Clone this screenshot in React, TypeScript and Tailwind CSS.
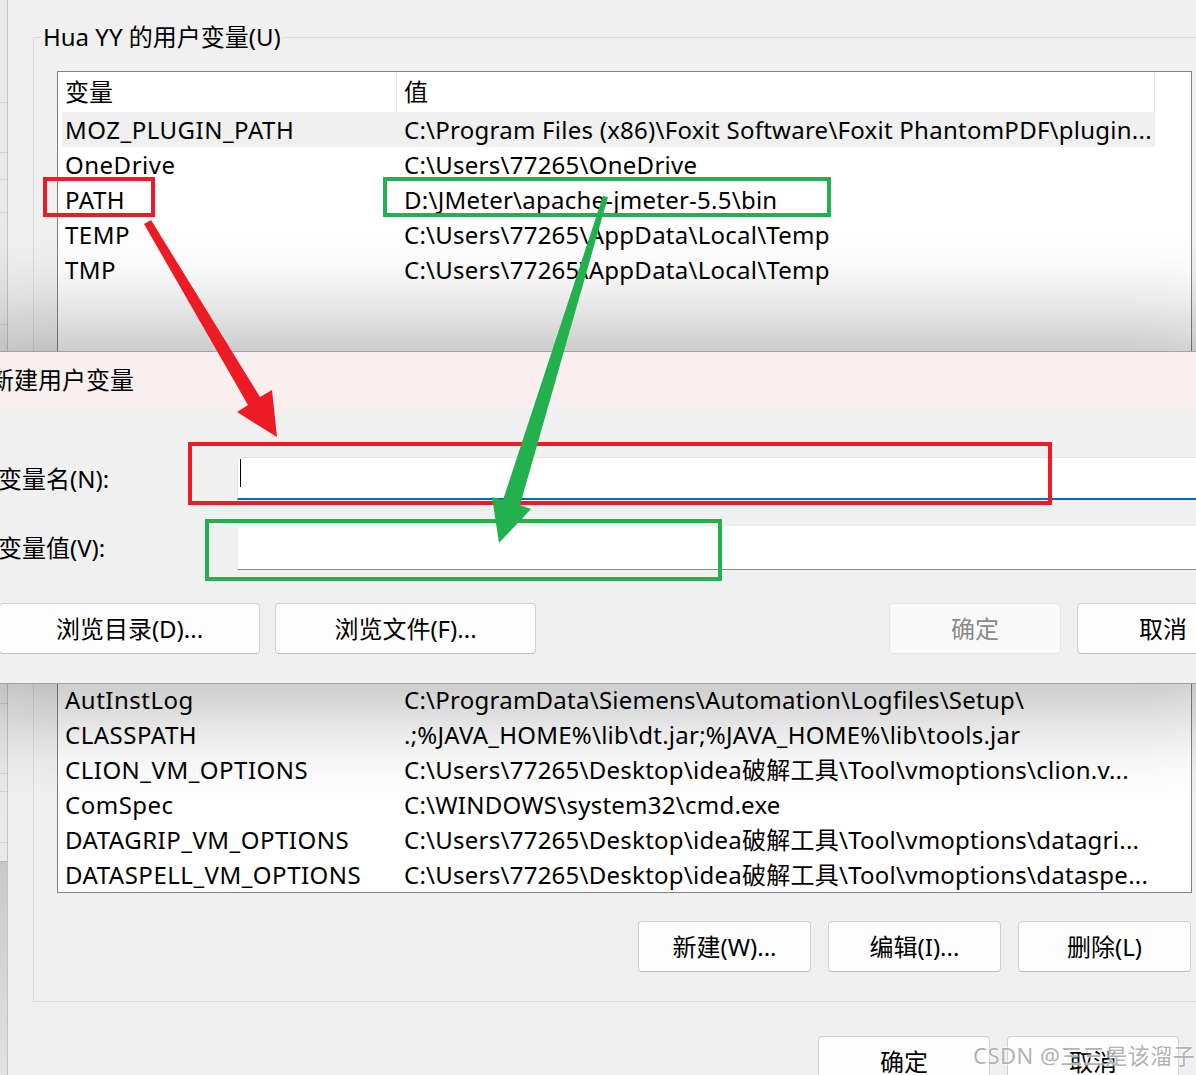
import React from 'react'

// rows of the user-variable list (top part visible above the dialog, bottom part below it)
const topRows = [
  ['MOZ_PLUGIN_PATH', 'C:\\Program Files (x86)\\Foxit Software\\Foxit PhantomPDF\\plugin...'],
  ['OneDrive', 'C:\\Users\\77265\\OneDrive'],
  ['PATH', 'D:\\JMeter\\apache-jmeter-5.5\\bin'],
  ['TEMP', 'C:\\Users\\77265\\AppData\\Local\\Temp'],
  ['TMP', 'C:\\Users\\77265\\AppData\\Local\\Temp'],
]

const bottomRows = [
  ['AutInstLog', 'C:\\ProgramData\\Siemens\\Automation\\Logfiles\\Setup\\'],
  ['CLASSPATH', '.;%JAVA_HOME%\\lib\\dt.jar;%JAVA_HOME%\\lib\\tools.jar'],
  ['CLION_VM_OPTIONS', 'C:\\Users\\77265\\Desktop\\idea破解工具\\Tool\\vmoptions\\clion.v...'],
  ['ComSpec', 'C:\\WINDOWS\\system32\\cmd.exe'],
  ['DATAGRIP_VM_OPTIONS', 'C:\\Users\\77265\\Desktop\\idea破解工具\\Tool\\vmoptions\\datagri...'],
  ['DATASPELL_VM_OPTIONS', 'C:\\Users\\77265\\Desktop\\idea破解工具\\Tool\\vmoptions\\dataspe...'],
]

function Row({ name, value, selected }: { name: string; value: string; selected?: boolean }) {
  return (
    <div className={`flex h-[35px] leading-[35px] w-[1093px] ${selected ? 'bg-[#f0f0f0]' : ''}`}>
      <div className="w-[335px] pl-[3px] whitespace-nowrap tracking-[0.5px]">{name}</div>
      <div className="w-[758px] pl-[7px] whitespace-nowrap overflow-hidden tracking-[0.25px]">{value}</div>
    </div>
  )
}

function WinButton({ children, className = '', disabled }: { children: React.ReactNode; className?: string; disabled?: boolean }) {
  return (
    <div
      className={`h-[51px] shrink-0 flex items-center justify-center rounded-[4px] border ${
        disabled
          ? 'bg-[#f9f9f9] border-[#e6e6e6] text-[#8a8a8a]'
          : 'bg-[#fdfdfd] border-[#d0d0d0] border-b-[#bdbdbd] text-black'
      } ${className}`}
    >
      {children}
    </div>
  )
}

export default function App() {
  return (
    <div className="relative w-[1196px] h-[1075px] overflow-hidden bg-[#f0f0f0] text-[24px] text-black [font-family:'Noto_Sans','Noto_Sans_CJK_SC',sans-serif]">
      <div className="flex h-full">
        {/* edge of another window behind */}
        <div className="w-[8px] shrink-0 flex flex-col bg-[#e9e9e9] border-r border-[#c4c4c4]">
          <div className="h-[103px] shrink-0 border-b border-[#d4d4d4]" />
          <div className="h-[50px] shrink-0 border-b border-[#d4d4d4]" />
          <div className="h-[27px] shrink-0 border-b border-[#d4d4d4]" />
          <div className="h-[33px] shrink-0 border-b border-[#d4d4d4]" />
          <div className="h-[112px] shrink-0 border-b border-[#d4d4d4]" />
          <div className="h-[379px] shrink-0 border-b border-[#d4d4d4]" />
          <div className="h-[70px] shrink-0 border-b border-[#d4d4d4]" />
          <div className="h-[18px] shrink-0 border-b border-[#d4d4d4]" />
          <div className="h-[51px] shrink-0 border-b border-[#d4d4d4]" />
          <div className="h-[19px] shrink-0 border-b border-[#b8b8b8]" />
          <div className="flex-1 bg-gradient-to-b from-[#c8c8c8] to-[#e2e2e2]" />
        </div>

        {/* environment variables window */}
        <div className="flex-1 flex flex-col">
          <div className="ml-[25px] mt-[37px] w-[1200px] shrink-0 border border-[#dcdcdc] pl-[23px] pb-[29px]">
            <div className="-mt-[17px] -ml-[16px] w-fit bg-[#f0f0f0] px-[2px] leading-[32px]">Hua YY 的用户变量(U)</div>

            <div className="mt-[18px] w-[1135px] border border-[#838383] bg-white pl-[4px] flex flex-col overflow-hidden">
              <div className="flex h-[40px] items-center w-[1093px]">
                <div className="w-[335px] pl-[3px] h-full flex items-center border-r border-[#e5e5e5]">变量</div>
                <div className="w-[758px] pl-[7px] h-full flex items-center border-r border-[#e5e5e5]">值</div>
              </div>
              {topRows.map(([n, v], i) => (
                <Row key={n} name={n} value={v} selected={i === 0} />
              ))}
              <div className="h-[395px] shrink-0" />
              {bottomRows.map(([n, v]) => (
                <Row key={n} name={n} value={v} />
              ))}
            </div>

            <div className="mt-[28px] w-[1135px] flex justify-end gap-[17px] pr-[1px]">
              <WinButton className="w-[173px]">新建(W)...</WinButton>
              <WinButton className="w-[173px]">编辑(I)...</WinButton>
              <WinButton className="w-[173px]">删除(L)</WinButton>
            </div>
          </div>

          <div className="mt-[34px] flex pl-[810px] gap-[17px]">
            <WinButton className="w-[172px]">确定</WinButton>
            <WinButton className="w-[172px]">取消</WinButton>
          </div>
        </div>
      </div>

      {/* 新建用户变量 dialog */}
      <div className="absolute left-[-20px] top-[351px] w-[1240px] h-[333px] border border-[#a3a3a3] bg-[#f0f0f0] shadow-[0_0_90px_25px_rgba(0,0,0,0.28)] flex flex-col">
        <div className="h-[56px] shrink-0 bg-[#f9efef] flex items-center pl-[9px]">新建用户变量</div>

        <div className="mt-[49px] flex items-center">
          <div className="w-[256px] shrink-0 pl-[17px]">变量名(N):</div>
          <div className="flex-1 h-[43px] bg-white border border-[#e6e6e6] border-b-2 border-b-[#0067c0] rounded-t-[4px] pl-[2px] pt-[1px]">
            <div className="w-[1px] h-[28px] bg-black" />
          </div>
        </div>

        <div className="mt-[25px] flex items-center">
          <div className="w-[256px] shrink-0 pl-[17px]">变量值(V):</div>
          <div className="flex-1 h-[45px] bg-white border border-[#ebebeb] border-b-[#8a8a8a] rounded-t-[4px]" />
        </div>

        <div className="mt-[33px] flex">
          <WinButton className="ml-[18px] w-[261px]">浏览目录(D)...</WinButton>
          <WinButton className="ml-[15px] w-[261px]">浏览文件(F)...</WinButton>
          <WinButton disabled className="ml-[353px] w-[172px]">确定</WinButton>
          <WinButton className="ml-[16px] w-[172px]">取消</WinButton>
        </div>
      </div>

      {/* annotation boxes */}
      <div className="absolute left-[43px] top-[177px] w-[112px] h-[40px] border-4 border-[#ed1c24]" />
      <div className="absolute left-[383px] top-[177px] w-[448px] h-[40px] border-4 border-[#22b14c]" />
      <div className="absolute left-[188px] top-[442px] w-[864px] h-[63px] border-4 border-[#ed1c24]" />
      <div className="absolute left-[205px] top-[519px] w-[517px] h-[62px] border-4 border-[#22b14c]" />

      {/* annotation arrows */}
      <svg className="absolute inset-0 pointer-events-none" width="1196" height="1075" viewBox="0 0 1196 1075">
        <polygon points="144,224 151,220 260,397 272,390 277,437 237,412 248,405" fill="#ed1c24" />
        <polygon points="603,196 608,197 520,505 531,509 499,543 492,497 503,500" fill="#22b14c" />
      </svg>

      <div className="absolute left-[973px] top-[1039px] whitespace-nowrap text-[22px] tracking-[0.5px] text-[#a8a8a8]/90 [text-shadow:0_0_2px_#ffffff,0_0_2px_#ffffff]">
        CSDN @三三是该溜子
      </div>
    </div>
  )
}
